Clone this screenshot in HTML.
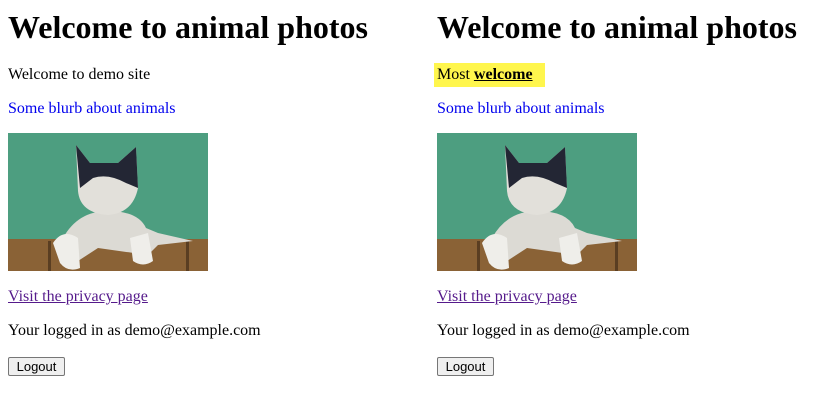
<!DOCTYPE html>
<html><head><style>
body{margin:0;width:830px;height:402px;background:#fff;font-family:"Liberation Serif",serif;font-size:16px;position:relative;overflow:hidden}
.a{position:absolute;line-height:18px;white-space:nowrap}
h1{position:absolute;margin:0;font-size:32px;line-height:37px;font-weight:bold}
.blue{color:#0000ee}
.vis{color:#551a8b;text-decoration:underline}
button{position:absolute;font-family:"Liberation Sans",sans-serif;font-size:13px;padding:1px 7px;width:57px;height:19px;background:#efefef;border:1px solid #767676;border-radius:2px;line-height:15px}
.hl{position:absolute;left:434px;top:63px;width:111px;height:24px;background:#fff64d}
</style></head><body>
<svg width="0" height="0" style="position:absolute"><defs>
<g id="cat">
<rect width="200" height="138" fill="#4d9e80"/>
<rect y="106" width="200" height="32" fill="#8a6236"/>
<rect x="40" y="108" width="3" height="30" fill="#5a3e22"/>
<rect x="178" y="108" width="3" height="30" fill="#5a3e22"/>
<path d="M55 105 Q70 78 100 78 Q130 78 138 95 L150 100 L185 108 L150 112 L140 122 L90 115 L70 128 L55 120Z" fill="#dcdad4"/>
<path d="M68 12 L82 30 L110 30 L128 14 L130 55 Q125 80 100 82 Q72 80 70 58Z" fill="#e2e0da"/>
<path d="M68 12 L82 30 L110 30 L128 14 L130 55 L118 50 Q100 40 85 45 L72 55Z" fill="#232634"/>
<path d="M45 110 Q55 95 70 105 L72 135 Q60 140 52 130Z" fill="#efeeea"/>
<path d="M122 105 L140 100 L145 128 Q135 135 125 128Z" fill="#efeeea"/>
</g></defs></svg>

<h1 style="left:8px;top:9px">Welcome to animal photos</h1>
<div class="a" style="left:8px;top:66px">Welcome to demo site</div>
<div class="a blue" style="left:8px;top:100px">Some blurb about animals</div>
<svg style="position:absolute;left:8px;top:133px" width="200" height="138"><use href="#cat"/></svg>
<div class="a vis" style="left:8px;top:288px">Visit the privacy page</div>
<div class="a" style="left:8px;top:322px">Your logged in as demo@example.com</div>
<button style="left:8px;top:357px">Logout</button>

<h1 style="left:437px;top:9px">Welcome to animal photos</h1>
<div class="hl"></div>
<div class="a" style="left:437px;top:66px">Most <b><u>welcome</u></b></div>
<div class="a blue" style="left:437px;top:100px">Some blurb about animals</div>
<svg style="position:absolute;left:437px;top:133px" width="200" height="138"><use href="#cat"/></svg>
<div class="a vis" style="left:437px;top:288px">Visit the privacy page</div>
<div class="a" style="left:437px;top:322px">Your logged in as demo@example.com</div>
<button style="left:437px;top:357px">Logout</button>
</body></html>
